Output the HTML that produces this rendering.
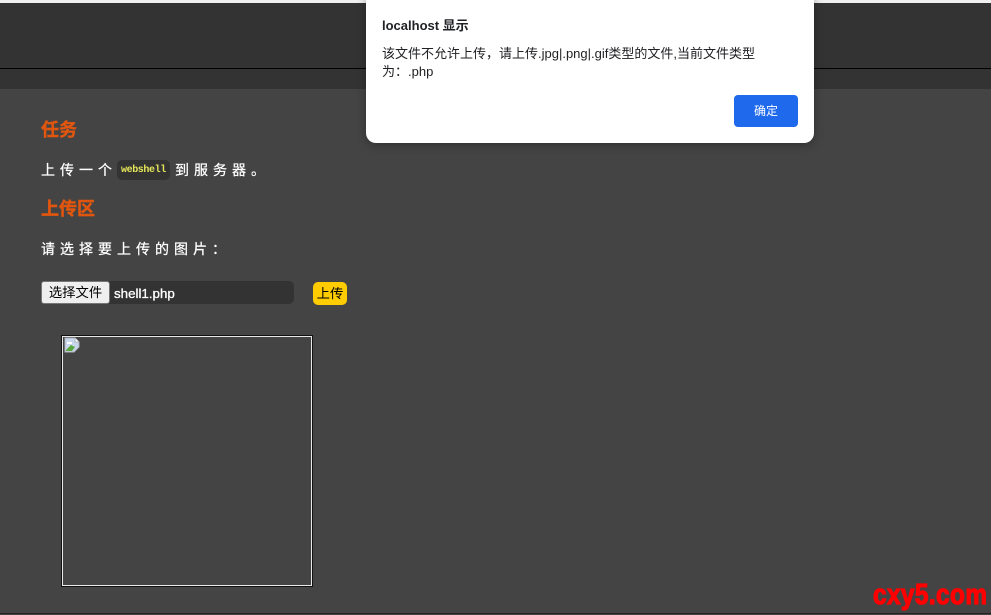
<!DOCTYPE html>
<html lang="zh">
<head>
<meta charset="utf-8">
<title>上传</title>
<style>
html,body{margin:0;padding:0;width:991px;height:615px;overflow:hidden;background:#444;}
body{position:relative;font-family:"Liberation Sans","Noto Sans CJK SC",sans-serif;color:#fff;}
.a{position:absolute;white-space:nowrap;}
h3{margin:0;font-size:18px;line-height:24px;font-weight:700;color:#e0560f;-webkit-text-stroke:.4px #e0560f;}
.p{font-size:14px;line-height:20px;letter-spacing:5px;-webkit-text-stroke:.25px #fff;}
</style>
</head>
<body>
<div class="a" style="left:0;top:0;width:991px;height:3px;background:#f0f0f0"></div>
<div class="a" style="left:0;top:3px;width:991px;height:65px;background:#333"></div>
<div class="a" style="left:0;top:68px;width:991px;height:1px;background:#000"></div>
<div class="a" style="left:0;top:69px;width:991px;height:20px;background:#333"></div>

<h3 class="a" style="left:41px;top:118px">任务</h3>
<div class="a p" style="left:41px;top:160px">上传一个</div>
<div class="a" style="left:117px;top:160px;width:53px;height:20px;background:#333;border-radius:5px"></div>
<div class="a" style="left:121px;top:164px;font:700 10px/14px 'Liberation Mono','DejaVu Sans Mono',monospace;letter-spacing:-.4px;color:#e6e65a">webshell</div>
<div class="a p" style="left:175px;top:160px">到服务器。</div>

<h3 class="a" style="left:41px;top:197px">上传区</h3>
<div class="a p" style="left:41px;top:239px">请选择要上传的图片：</div>

<div class="a" style="left:41px;top:281px;width:253px;height:23px;background:#333;border-radius:5px"></div>
<div class="a" style="left:41px;top:281px;width:69px;height:23px;box-sizing:border-box;background:#efefef;border:1px solid #767676;border-radius:3px;color:#000;font-size:13.33px;line-height:21px;text-align:center">选择文件</div>
<div class="a" style="left:114px;top:285px;font-size:13.33px;line-height:17px;color:#fff;-webkit-text-stroke:.3px #fff">shell1.php</div>
<div class="a" style="left:313px;top:282px;width:34px;height:23px;background:#fc0;border-radius:5px;color:#000;font-size:13.33px;line-height:23px;text-align:center">上传</div>

<div class="a" style="left:61px;top:335px;width:252px;height:252px;box-sizing:border-box;border:1px solid #111"></div>
<div class="a" style="left:62px;top:336px;width:250px;height:250px;box-sizing:border-box;border:1px solid #e8e8e8"></div>
<svg class="a" style="left:64px;top:337px" width="16" height="16" viewBox="0 0 16 16">
<path d="M1 1H11L15 5V10L10 15H1Z" fill="#c9d7ee" stroke="#aeb4bc"/>
<path d="M2 13L7 8L11 10L8 14H2Z" fill="#5aa83c"/>
<path d="M3 5h5v2H3z" fill="#fff"/>
<path d="M11 1V5H15" fill="#fff" stroke="#aeb4bc"/>
</svg>

<div class="a" style="left:366px;top:-10px;width:448px;height:153px;background:#fff;border-radius:10px;box-shadow:0 2px 10px rgba(0,0,0,.3)"></div>
<div class="a" style="left:382px;top:17px;font-size:13px;line-height:18px;font-weight:700;color:#202124">localhost 显示</div>
<div class="a" style="left:382px;top:45px;font-size:13px;line-height:18px;color:#202124">该文件不允许上传，请上传.jpg|.png|.gif类型的文件,当前文件类型<br>为：.php</div>
<div class="a" style="left:734px;top:95px;width:64px;height:32px;background:#1f69ed;border-radius:4px;color:#fff;font-size:12px;line-height:32px;text-align:center">确定</div>

<div class="a" style="left:873px;top:577px;font:700 29px/36px 'Liberation Sans',sans-serif;color:#f00;transform-origin:left top;transform:scaleX(.84);-webkit-text-stroke:1.2px #f00;letter-spacing:.5px">cxy5.com</div>
<div class="a" style="left:0;top:613px;width:991px;height:1px;background:#222"></div>
</body>
</html>
